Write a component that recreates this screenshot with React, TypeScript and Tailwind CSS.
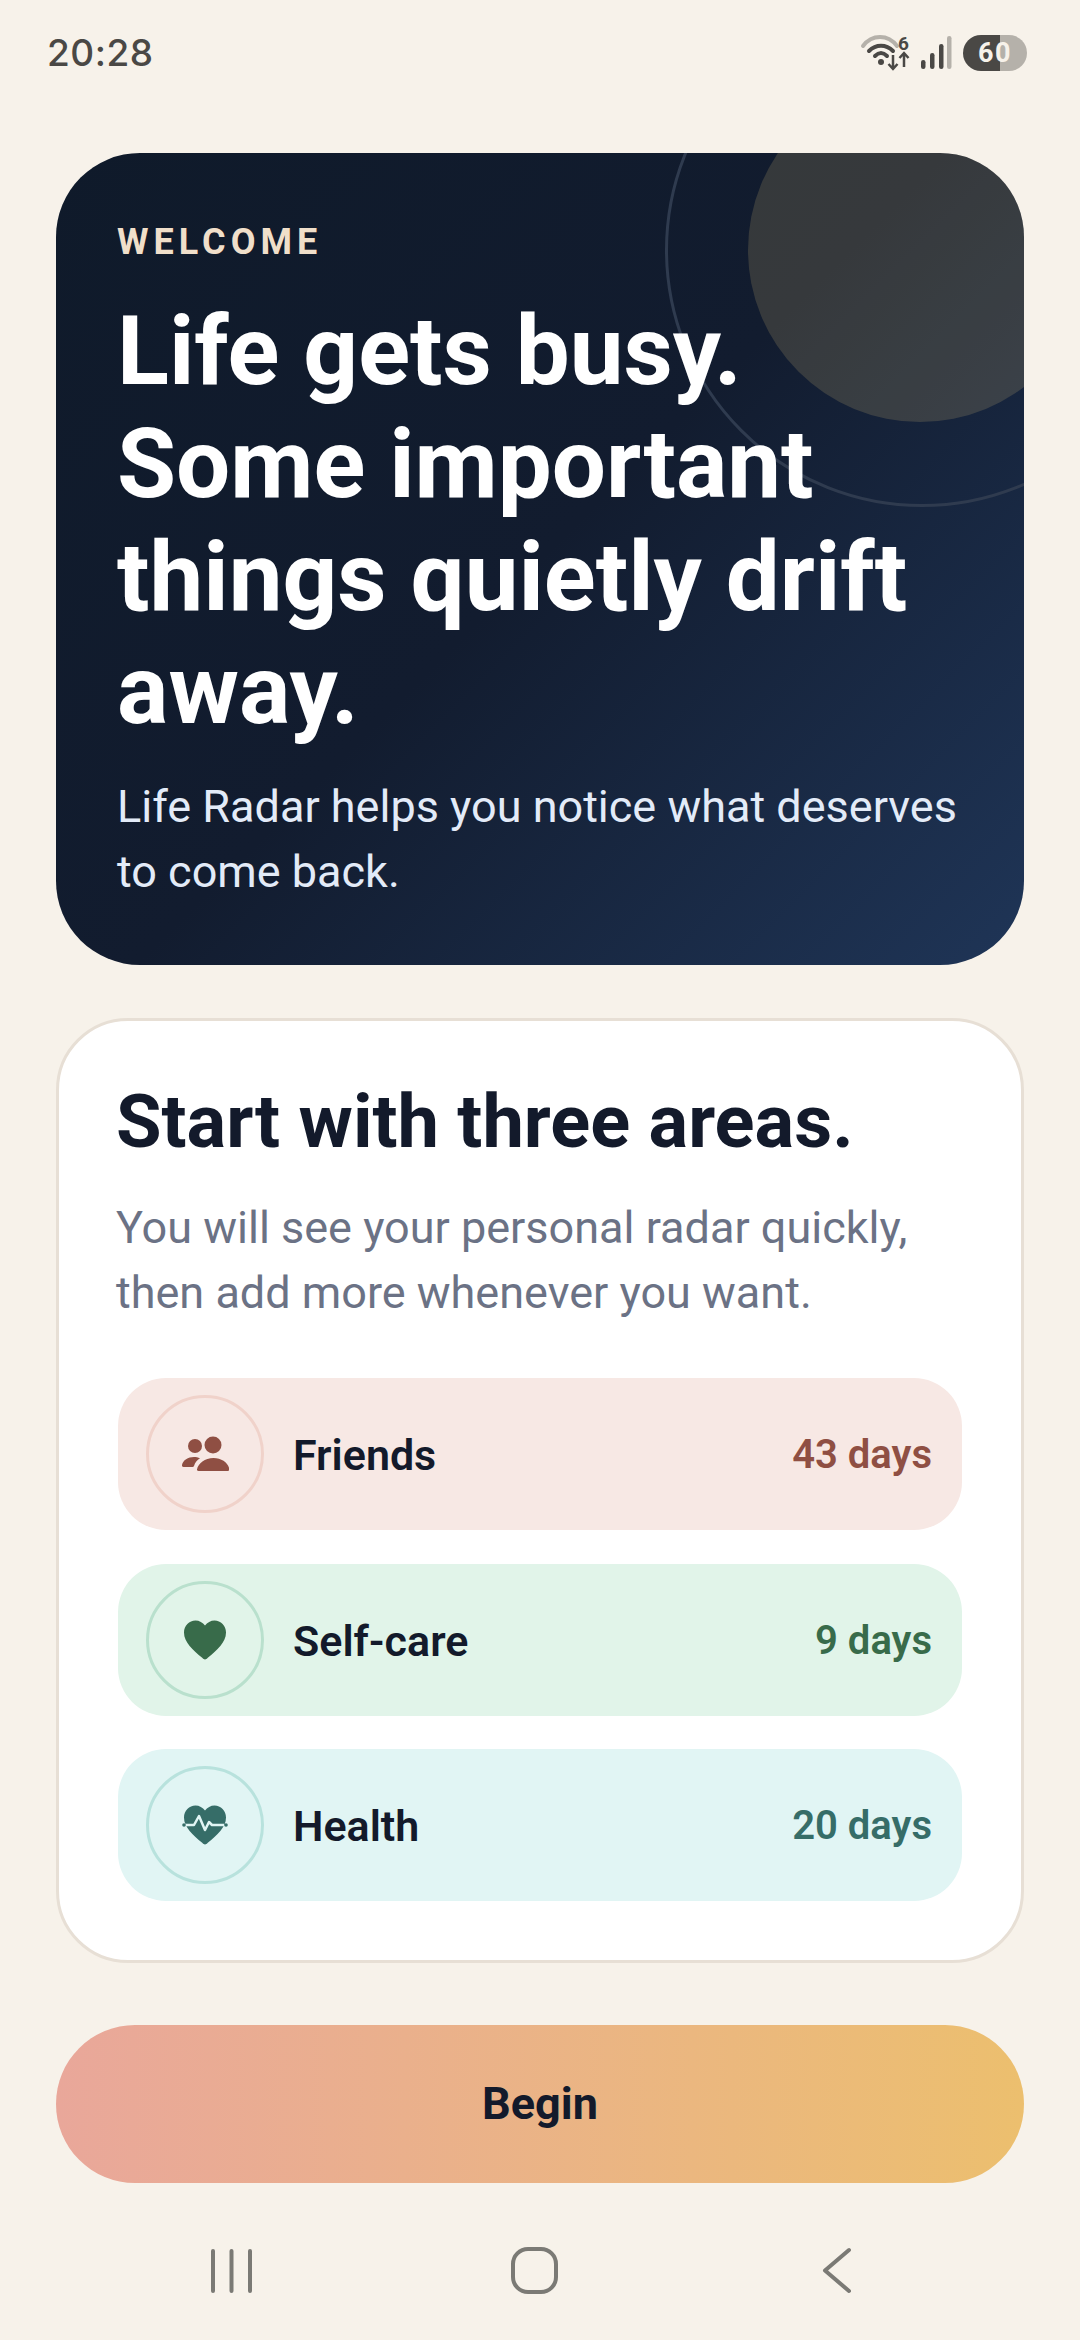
const rows = [
  { name: "Friends", days: "43 days", bg: "bg-[#f7e8e4]", ring: "border-[#f0d2ca]", color: "text-[#8f4f43]", icon: "friends", mt: "" },
  { name: "Self-care", days: "9 days", bg: "bg-[#e1f4e9]", ring: "border-[#b9e0cd]", color: "text-[#386b4a]", icon: "heart", mt: "mt-[34px]" },
  { name: "Health", days: "20 days", bg: "bg-[#e1f5f4]", ring: "border-[#b8e2dd]", color: "text-[#366d68]", icon: "pulse", mt: "mt-[33px]" },
];

function RowIcon({ kind }: { kind: string }) {
  if (kind === "friends")
    return (
      <svg width="48" height="36" viewBox="0 0 48 36" className="fill-current">
        <circle cx="14" cy="10" r="7" />
        <circle cx="32" cy="9" r="8.500" />
        <path d="M1 29c1-5 6-8 12-8 2 0 4 .3 6 1.200-3 1.800-5 4.300-6 7.800-.3.800-1 1-2 1H2.500C1.500 31 .8 30 1 29z" />
        <path d="M16 33.500c1-6 8-11.500 16.500-11.500S48 27.500 48.300 33.500c0 1-.6 1.500-1.500 1.500h-29.300c-1 0-1.700-.6-1.500-1.500z" />
      </svg>
    );
  if (kind === "heart")
    return (
      <svg width="44" height="40" viewBox="0 0 44 40" className="fill-current">
        <path d="M22 39.500c-1 0-1.800-.7-2.800-1.700C10 30 1 22.500 1 12.500 1 5.500 6.200.5 12.500.5c3.800 0 7.300 2 9.500 5 2.200-3 5.700-5 9.500-5C37.800.5 43 5.500 43 12.500c0 10-9 17.500-18.200 25.300-1 1-1.800 1.700-2.800 1.700z" />
      </svg>
    );
  return (
    <svg width="46" height="40" viewBox="0 0 46 40" className="fill-current">
      <path d="M23 39.500c-1 0-1.800-.7-2.800-1.700C11 30 2 22.500 2 12.500 2 5.500 7.200.5 13.500.5c3.800 0 7.300 2 9.500 5 2.200-3 5.700-5 9.500-5C38.800.5 44 5.500 44 12.500c0 10-9 17.500-18.200 25.300-1 1-1.800 1.700-2.800 1.700z" />
      <path d="M3 20h9l5-9 6 14 4-8 3 3h12" fill="none" className="stroke-[#e1f5f4]" strokeWidth="2.500" strokeLinejoin="round" />
      <circle cx="2" cy="20" r="1.800" />
      <circle cx="44" cy="20" r="1.800" />
    </svg>
  );
}

export default function App() {
  return (
    <div className="w-[1080px] h-[2340px] bg-[#f7f2ea] flex flex-col overflow-hidden font-['Roboto',sans-serif]">
      <div className="h-[153px] shrink-0 flex items-start justify-between pl-[47px] pr-[50px] pt-[31px]">
        <span className="font-['Inter',sans-serif] text-[37px] leading-[44px] font-medium text-[#4a4845] tracking-[0.5px]">20:28</span>
        <svg width="170" height="38" viewBox="0 0 170 38" className="text-[#4a4845] fill-current mt-[3px] overflow-visible">
          <path d="M3 12 C12 0 28 0 37 12" fill="none" stroke="#b5b1aa" strokeWidth="4" strokeLinecap="round" />
          <path d="M9 17 C16 10 26 10 33 17" fill="none" stroke="currentColor" strokeWidth="4" strokeLinecap="round" />
          <path d="M15 22 C19 18 23 18 27 22" fill="none" stroke="currentColor" strokeWidth="4" strokeLinecap="round" />
          <circle cx="21" cy="28" r="3" />
          <text x="38" y="16" fontFamily="Roboto" fontWeight="700" fontSize="19">6</text>
          <path d="M33 21v14M28.500 30l4.500 5 4.500-5M44 33V19M39.500 24l4.500-5 4.500 5" fill="none" stroke="currentColor" strokeWidth="2.500" />
          <rect x="61" y="26" width="4.500" height="9" rx="2.200" />
          <rect x="70" y="19" width="4.500" height="16" rx="2.200" />
          <rect x="79" y="10" width="4.500" height="25" rx="2.200" />
          <rect x="87" y="2" width="4.500" height="33" rx="2.200" fill="#b5b1aa" />
          <path d="M121 1h19v36h-19a18 18 0 0 1 0-36z" />
          <path d="M140 1h9a18 18 0 0 1 0 36h-9z" fill="#b5b1aa" />
          <text x="118" y="28" fontFamily="Roboto" fontWeight="700" fontSize="27" letterSpacing="1.500" fill="#f7f2ea">60</text>
        </svg>
      </div>

      <section className="relative mx-[56px] h-[812px] shrink-0 rounded-[84px] overflow-hidden bg-[linear-gradient(135deg,#0f1a2a_0%,#121c2f_50%,#1f3557_100%)] px-[61px] pt-[67px]">
        <div className="absolute left-[609px] top-[-160px] w-[514px] h-[514px] rounded-full border-[3px] border-[#2f3b4f]" />
        <div className="absolute left-[692px] top-[-75px] w-[344px] h-[344px] rounded-full bg-[#e0c27c]/18" />
        <div className="relative text-[36px] leading-[44px] font-bold tracking-[5px] text-[#f0dfca]">WELCOME</div>
        <h1 className="relative mt-[31px] text-[96px] leading-[113px] font-bold text-white">
          Life gets busy.<br />Some important<br />things quietly drift<br />away.
        </h1>
        <p className="relative mt-[27px] text-[45px] leading-[65px] text-[#e3ebf8]">
          Life Radar helps you notice what deserves<br />to come back.
        </p>
      </section>

      <section className="mx-[56px] mt-[53px] h-[945px] shrink-0 rounded-[72px] border-[3px] border-[#e7dfd5] bg-white px-[59px] pt-[59px]">
        <h2 className="-ml-[2px] text-[74px] leading-[84px] font-bold text-[#131a2b]">Start with three areas.</h2>
        <p className="-ml-[2px] mt-[31px] text-[45px] leading-[65px] text-[#6b7285]">
          You will see your personal radar quickly,<br />then add more whenever you want.
        </p>
        <div className="mt-[53px] flex flex-col">
          {rows.map((r) => (
            <div key={r.name} className={`${r.mt} ${r.bg} h-[152px] rounded-[48px] flex items-center pl-[28px] pr-[30px]`}>
              <div className={`w-[118px] h-[118px] rounded-full border-[3px] ${r.ring} ${r.color} flex items-center justify-center`}>
                <RowIcon kind={r.icon} />
              </div>
              <span className="ml-[29px] mt-[2px] text-[43px] font-semibold text-[#131a2b]">{r.name}</span>
              <span className={`ml-auto mt-[2px] text-[40px] font-semibold ${r.color}`}>{r.days}</span>
            </div>
          ))}
        </div>
      </section>

      <button className="mx-[56px] mt-[62px] h-[158px] shrink-0 rounded-full bg-gradient-to-r from-[#e9a79a] to-[#ecbf6e] text-[45px] font-bold text-[#131a2b]">
        Begin
      </button>

      <div className="flex-1 flex items-center justify-between pl-[211px] pr-[227px] pt-[18px]">
        <svg width="41" height="44" viewBox="0 0 41 44" fill="none" stroke="#7b7a75" strokeWidth="4" strokeLinecap="round">
          <path d="M2 2v40M20.500 2v40M39 2v40" />
        </svg>
        <svg width="49" height="49" viewBox="0 0 49 49" fill="none" stroke="#7b7a75" strokeWidth="4" className="mr-[5px]">
          <rect x="3" y="3" width="43" height="43" rx="15" />
        </svg>
        <svg width="32" height="49" viewBox="0 0 32 49" fill="none" stroke="#7b7a75" strokeWidth="4" strokeLinecap="round" strokeLinejoin="round">
          <path d="M28 4 L4 24.500 L28 45" />
        </svg>
      </div>
    </div>
  );
}
